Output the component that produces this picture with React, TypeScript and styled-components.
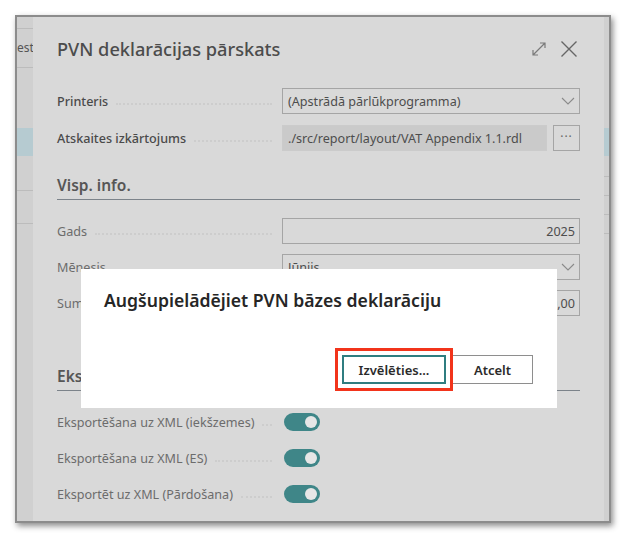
import React from 'react';
import styled, { createGlobalStyle } from 'styled-components';

const GlobalStyle = createGlobalStyle`
  html, body {
    margin: 0;
    padding: 0;
    background: #ffffff;
  }
  body {
    font-family: 'Noto Sans', 'Open Sans', sans-serif;
  }
`;

const Page = styled.div`
  width: 625px;
  height: 540px;
  padding: 15px 0 0 15px;
  box-sizing: border-box;
`;

const Frame = styled.div`
  position: relative;
  width: 596px;
  height: 508px;
  box-sizing: border-box;
  border: 2px solid #8c8c8c;
  box-shadow: 2px 3px 6px rgba(0, 0, 0, 0.45);
  display: flex;
  background: #d3d3d3;
  overflow: hidden;
`;

const Strip = styled.div<{ $width: number; $align: 'left' | 'right' }>`
  width: ${(p) => p.$width}px;
  flex-shrink: 0;
  display: flex;
  flex-direction: column;
  background: #d0d0d0;
  overflow: hidden;
  font-size: 12px;
  color: #555;
  text-align: ${(p) => p.$align};
`;

const StripRow = styled.div<{ $h: number; $blue?: boolean; $line?: boolean }>`
  height: ${(p) => p.$h}px;
  flex-shrink: 0;
  line-height: ${(p) => p.$h}px;
  white-space: nowrap;
  background: ${(p) => (p.$blue ? '#b6cbd1' : 'transparent')};
  border-bottom: ${(p) => (p.$line ? '1px solid #bcbcbc' : 'none')};
`;

const Panel = styled.div`
  flex: 1;
  background: #d9d9d9;
  padding: 0 24px 0 24px;
  display: flex;
  flex-direction: column;
  color: #555;
  font-size: 12.6px;
`;

const Header = styled.div`
  height: 62px;
  display: flex;
  align-items: center;
  padding: 4px 0 3px;
  box-sizing: border-box;
  margin-bottom: 9px;
`;

const Title = styled.div`
  flex: 1;
  font-size: 18.2px;
  color: #4c4c4c;
  font-weight: 500;
`;

const IconBtn = styled.div`
  width: 22px;
  height: 22px;
  margin-left: 8px;
  display: flex;
  align-items: center;
  justify-content: center;
  color: #6a6a6a;
`;

const Rows = styled.div<{ $gap: number }>`
  display: flex;
  flex-direction: column;
  gap: ${(p) => p.$gap}px;
`;

const Row = styled.div`
  height: 26px;
  display: flex;
  align-items: center;
`;

const Label = styled.div<{ $strong?: boolean }>`
  width: 225px;
  display: flex;
  align-items: center;
  white-space: nowrap;
  color: ${(p) => (p.$strong ? '#4a4a4a' : '#6c6c6c')};
  font-weight: ${(p) => (p.$strong ? 500 : 400)};
`;

const Leader = styled.span`
  flex: 1;
  margin: 5px 10px 0 8px;
  border-bottom: 2px dotted #cdcdcd;
  height: 0;
`;

const Field = styled.div<{ $filled?: boolean; $right?: boolean }>`
  flex: 1;
  height: 26px;
  box-sizing: border-box;
  border: 1px solid ${(p) => (p.$filled ? '#cbcbcb' : '#a5a5a5')};
  background: ${(p) => (p.$filled ? '#cacaca' : '#d9d9d9')};
  display: flex;
  align-items: center;
  justify-content: ${(p) => (p.$right ? 'flex-end' : 'space-between')};
  padding: 0 4px 0 5px;
  color: #4d4d4d;
  white-space: nowrap;
  overflow: hidden;
`;

const DotsBtn = styled.div`
  width: 27px;
  height: 26px;
  margin-left: 6px;
  box-sizing: border-box;
  border: 1px solid #a5a5a5;
  display: flex;
  align-items: center;
  justify-content: center;
  color: #666;
  font-size: 12px;
  letter-spacing: 1px;
  padding-bottom: 4px;
`;

const Section = styled.div<{ $top: number }>`
  margin-top: ${(p) => p.$top}px;
  margin-bottom: 18px;
  padding-bottom: 3px;
  border-bottom: 1.5px solid #7c838a;
  font-size: 15.5px;
  font-weight: 600;
  color: #565656;
  line-height: 22px;
`;

const Toggle = styled.div`
  width: 36px;
  height: 18px;
  margin-left: 2px;
  border-radius: 9px;
  background: #3f8688;
  display: flex;
  align-items: center;
  justify-content: flex-end;
  padding-right: 3px;
  box-sizing: border-box;
  &::after {
    content: '';
    width: 12px;
    height: 12px;
    border-radius: 50%;
    background: #e6e6e6;
  }
`;

const Confirm = styled.div`
  position: absolute;
  left: 64px;
  top: 252px;
  width: 476px;
  height: 139px;
  box-sizing: border-box;
  background: #ffffff;
  padding: 19px 24px 24px 23px;
  display: flex;
  flex-direction: column;
  justify-content: space-between;
`;

const ConfirmTitle = styled.div`
  font-size: 17.6px;
  font-weight: 600;
  color: #262626;
  line-height: 24px;
`;

const Actions = styled.div`
  display: flex;
  justify-content: flex-end;
  gap: 6px;
`;

const Button = styled.div<{ $primary?: boolean; $w: number }>`
  width: ${(p) => p.$w}px;
  height: 29px;
  box-sizing: border-box;
  border: ${(p) => (p.$primary ? '2px solid #2f7d80' : '1px solid #8e8e8e')};
  display: flex;
  align-items: center;
  justify-content: center;
  font-size: 13px;
  font-weight: 600;
  color: #2b2b2b;
  background: #fff;
  outline: ${(p) => (p.$primary ? '3.5px solid #f2341b' : 'none')};
  outline-offset: ${(p) => (p.$primary ? '4px' : '0')};
  position: relative;
  z-index: ${(p) => (p.$primary ? 1 : 0)};
`;

const Chevron = () => (
  <svg width="14" height="8" viewBox="0 0 14 8" fill="none">
    <path d="M1 1l6 6 6-6" stroke="#8a8a8a" strokeWidth="1.1" />
  </svg>
);

const leftRows = [
  { h: 11, line: true },
  { h: 38, text: 'est', line: true },
  { h: 60 },
  { h: 28, blue: true },
  { h: 34, line: true },
  { h: 32, line: true },
];

const rightRows = [
  { h: 11 },
  { h: 100 },
  { h: 28, blue: true },
  { h: 20, line: true },
  { h: 18, line: true },
  { h: 18, line: true },
  { h: 18, line: true },
];

const toggles = [
  'Eksportēšana uz XML (iekšzemes)',
  'Eksportēšana uz XML (ES)',
  'Eksportēt uz XML (Pārdošana)',
];

export default function App() {
  return (
    <Page>
      <GlobalStyle />
      <Frame>
        <Strip $width={16} $align="right">
          {leftRows.map((r, i) => (
            <StripRow key={i} $h={r.h} $blue={r.blue} $line={r.line}>
              {r.text}
            </StripRow>
          ))}
        </Strip>
        <Panel>
          <Header>
            <Title>PVN deklarācijas pārskats</Title>
            <IconBtn>
              <svg width="16" height="16" viewBox="0 0 16 16" fill="none" stroke="#7a7a7a" strokeWidth="1.2">
                <path d="M2 14L14 2M9 2h5v5M2 9v5h5" />
              </svg>
            </IconBtn>
            <IconBtn>
              <svg width="18" height="18" viewBox="0 0 18 18" fill="none" stroke="#666" strokeWidth="1.4">
                <path d="M1.5 1.5l15 15M16.5 1.5l-15 15" />
              </svg>
            </IconBtn>
          </Header>

          <Rows $gap={11}>
            <Row>
              <Label $strong>
                Printeris
                <Leader />
              </Label>
              <Field>
                (Apstrādā pārlūkprogramma)
                <Chevron />
              </Field>
            </Row>
            <Row>
              <Label $strong>
                Atskaites izkārtojums
                <Leader />
              </Label>
              <Field $filled>./src/report/layout/VAT Appendix 1.1.rdl</Field>
              <DotsBtn>···</DotsBtn>
            </Row>
          </Rows>

          <Section $top={23}>Visp. info.</Section>

          <Rows $gap={10}>
            <Row>
              <Label>
                Gads
                <Leader />
              </Label>
              <Field $right>2025</Field>
            </Row>
            <Row>
              <Label>
                Mēnesis
                <Leader />
              </Label>
              <Field>
                Jūnijs
                <Chevron />
              </Field>
            </Row>
            <Row>
              <Label>
                Summa
                <Leader />
              </Label>
              <Field $right>0,00</Field>
            </Row>
          </Rows>

          <Section $top={49}>Eksports</Section>

          <Rows $gap={10}>
            {toggles.map((t) => (
              <Row key={t}>
                <Label>
                  {t}
                  <Leader />
                </Label>
                <Toggle />
              </Row>
            ))}
          </Rows>
        </Panel>
        <Strip $width={5} $align="left">
          {rightRows.map((r, i) => (
            <StripRow key={i} $h={r.h} $blue={r.blue} $line={r.line} />
          ))}
        </Strip>

        <Confirm>
          <ConfirmTitle>Augšupielādējiet PVN bāzes deklarāciju</ConfirmTitle>
          <Actions>
            <Button $primary $w={104}>
              Izvēlēties...
            </Button>
            <Button $w={81}>Atcelt</Button>
          </Actions>
        </Confirm>
      </Frame>
    </Page>
  );
}
